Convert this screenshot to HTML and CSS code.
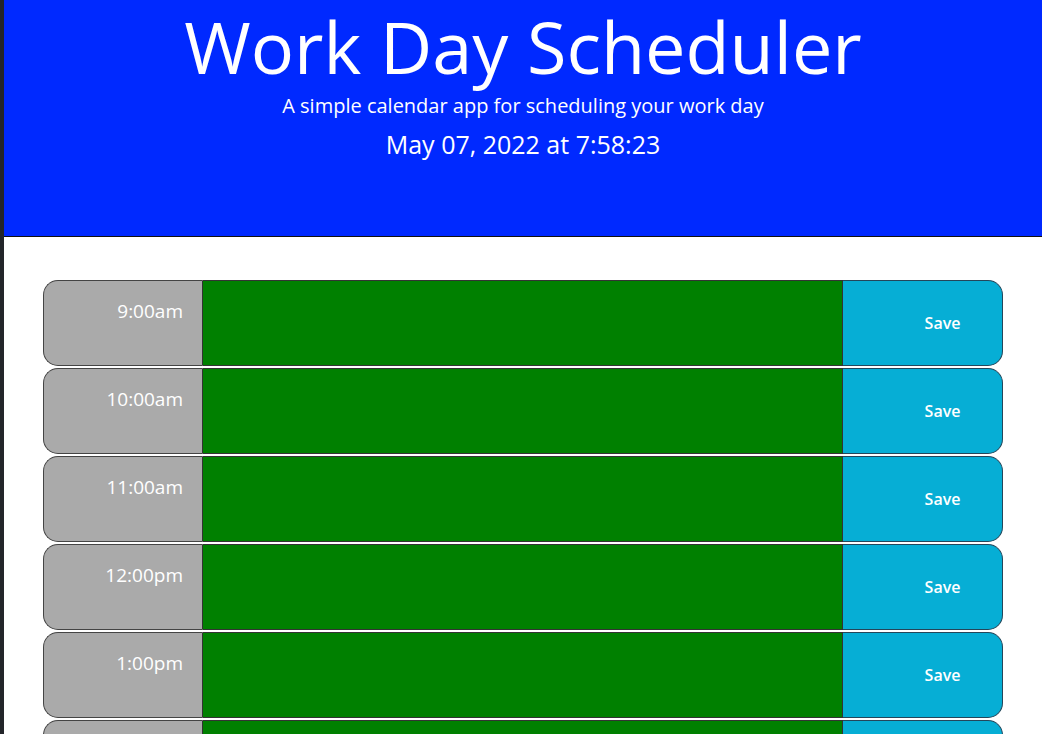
FILE: index.html
```html
<!DOCTYPE html>
<html lang="en">
<head>
<meta charset="utf-8">
<title>Work Day Scheduler</title>
<link rel="stylesheet" href="styles.css">
</head>
<body>
<div class="edge"></div>
<div class="page">
  <header class="jumbotron">
    <h1 class="title">Work Day Scheduler</h1>
    <p class="lead">A simple calendar app for scheduling your work day</p>
    <p class="date">May 07, 2022 at 7:58:23</p>
  </header>
  <main class="container">
    <div class="row"><div class="hour">9:00am</div><textarea class="desc present"></textarea><button class="saveBtn">Save</button></div>
    <div class="row"><div class="hour">10:00am</div><textarea class="desc present"></textarea><button class="saveBtn">Save</button></div>
    <div class="row"><div class="hour">11:00am</div><textarea class="desc present"></textarea><button class="saveBtn">Save</button></div>
    <div class="row"><div class="hour">12:00pm</div><textarea class="desc present"></textarea><button class="saveBtn">Save</button></div>
    <div class="row"><div class="hour">1:00pm</div><textarea class="desc present"></textarea><button class="saveBtn">Save</button></div>
    <div class="row"><div class="hour">2:00pm</div><textarea class="desc present"></textarea><button class="saveBtn">Save</button></div>
  </main>
</div>
</body>
</html>
```

FILE: styles.css
```css
html, body {
  margin: 0;
  padding: 0;
  height: 100%;
  overflow: hidden;
}
body {
  display: flex;
  font-family: "Open Sans", "Noto Sans", sans-serif;
  background: #fff;
}
.edge {
  flex: 0 0 4px;
  background: #23252a;
}
.page {
  flex: 1;
  min-width: 0;
}
.jumbotron {
  background: #0029ff;
  color: #fff;
  text-align: center;
  height: 237px;
  border-bottom: 1px solid #111;
  box-sizing: border-box;
  padding-top: 1px;
}
.title {
  margin: 0;
  font-size: 72px;
  font-weight: 400;
  line-height: 90px;
}
.lead {
  margin: 0;
  font-size: 20px;
  line-height: 30px;
}
.date {
  margin: 5px 0 0;
  font-size: 25px;
  line-height: 36px;
}
.container {
  width: 960px;
  margin: 43px auto 0;
  display: flex;
  flex-direction: column;
  gap: 2px;
}
.row {
  display: flex;
  height: 86px;
}
.hour {
  flex: 0 0 160px;
  box-sizing: border-box;
  background: #aaaaaa;
  color: #fff;
  border: 1px solid #444;
  border-right: 1px solid #333;
  border-radius: 15px 0 0 15px;
  text-align: right;
  padding: 17px 19px 0 0;
  font-size: 19px;
  line-height: 26px;
}
.desc {
  flex: 0 0 640px;
  box-sizing: border-box;
  margin: 0;
  border: 1px solid #333;
  border-left: none;
  background: #008000;
  resize: none;
  font: inherit;
}
.saveBtn {
  flex: 0 0 160px;
  box-sizing: border-box;
  background: #06aed5;
  color: #fff;
  border: 1px solid #24465a;
  border-left: none;
  border-radius: 0 15px 15px 0;
  font-family: inherit;
  font-size: 16px;
  font-weight: 600;
  padding: 0 0 0 40px;
  text-align: center;
}
```
